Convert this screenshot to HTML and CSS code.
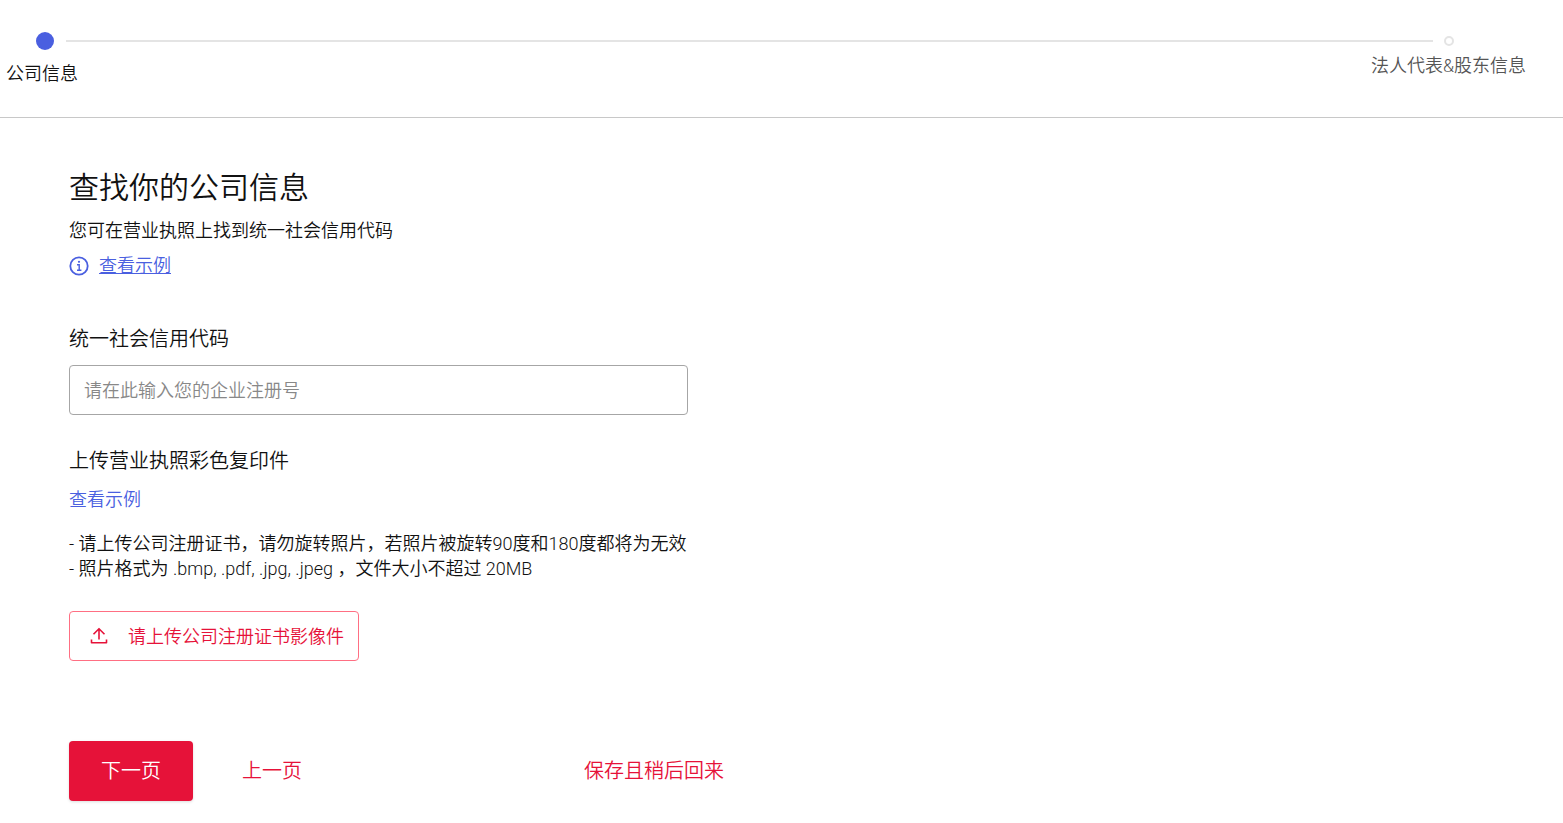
FILE: index.html
```html
<!DOCTYPE html>
<html lang="zh-CN">
  <head>
    <meta charset="UTF-8" />
    <meta name="viewport" content="width=device-width, initial-scale=1.0" />
    <title>公司信息</title>
    <link rel="stylesheet" href="styles.css">
  </head>
  <body>
    <header>
      <div class="stepper">
        <span class="dot dot-active"></span>
        <span class="line"></span>
        <span class="dot"></span>
      </div>
      <div class="step-labels">
        <span class="step-current">公司信息</span>
        <span class="step-next">法人代表&amp;股东信息</span>
      </div>
    </header>

    <main>
      <h1>查找你的公司信息</h1>
      <p class="intro">您可在营业执照上找到统一社会信用代码</p>
      <div class="example">
        <svg width="20" height="20" viewBox="0 0 20 20" fill="none" stroke="currentColor" stroke-width="1.8" aria-hidden="true">
          <circle cx="10" cy="10" r="8.7" />
          <path d="M8 8.7h2.2V14.5M8 14.2h4.4" stroke-width="1.4" />
          <circle cx="10" cy="5.8" r="1.1" fill="currentColor" stroke="none" />
        </svg>
        <a href="#">查看示例</a>
      </div>

      <form>
        <label for="creditCode">统一社会信用代码</label>
        <input type="text" id="creditCode" placeholder="请在此输入您的企业注册号" />

        <h2>上传营业执照彩色复印件</h2>
        <a class="upload-example" href="#">查看示例</a>
        <p class="notes">
          - 请上传公司注册证书，请勿旋转照片，若照片被旋转90度和180度都将为无效<br />
          - 照片格式为 .bmp, .pdf, .jpg, .jpeg ，文件大小不超过 20MB
        </p>
        <button type="button" class="upload">
          <svg width="18" height="18" viewBox="0 0 18 18" fill="none" stroke="currentColor" stroke-width="1.6" aria-hidden="true">
            <path d="M9 12.500V2M3.500 7.200L9 1.700l5.500 5.500M1.500 12.500v3.300h15v-3.300" stroke-linejoin="round" />
          </svg>
          请上传公司注册证书影像件
        </button>

        <div class="actions">
          <button type="submit" class="next">下一页</button>
          <button type="button" class="back">上一页</button>
          <button type="button" class="save">保存且稍后回来</button>
        </div>
      </form>
    </main>
  </body>
</html>
```

FILE: styles.css
```css
* {
  box-sizing: border-box;
}
body {
  margin: 0;
  background-color: #fff;
  color: #111;
  font-family: Roboto, 'Noto Sans CJK SC', sans-serif;
  font-size: 18px;
  font-weight: 350;
  line-height: 25px;
}
a {
  color: #4a5fe0;
}

/* Progress steps */
header {
  padding: 32px 37px 31px 6px;
  border-bottom: 1px solid #c8c8c8;
}
.stepper {
  display: flex;
  align-items: center;
  padding: 0 72px 0 30px;
}
.dot {
  width: 10px;
  height: 10px;
  border: 2px solid #e4e4e4;
  border-radius: 50%;
}
.dot-active {
  width: 18px;
  height: 18px;
  border: none;
  background-color: #4a5fe0;
}
.line {
  flex: 1;
  height: 2px;
  margin: 0 11px 0 12px;
  background-color: #e4e4e4;
}
.step-labels {
  display: flex;
  justify-content: space-between;
  align-items: flex-start;
  padding-top: 3px;
}
.step-current {
  padding-top: 8px;
}
.step-next {
  color: #555;
}

main {
  padding: 48px 69px 22px;
}
h1 {
  margin: 0;
  font-size: 30px;
  font-weight: 350;
  line-height: 44px;
}
.intro {
  margin: 8px 0 10px;
}
.example {
  display: flex;
  align-items: center;
  gap: 10px;
  color: #4a5fe0;
}

/* Company form */
form {
  margin-top: 47px;
}
label,
h2 {
  display: block;
  margin: 0;
  font-size: 20px;
  font-weight: 350;
  line-height: 28px;
}
input[type='text'] {
  display: block;
  width: 100%;
  max-width: 619px;
  height: 50px;
  margin: 12px 0 32px;
  padding: 0 14px;
  border: 1px solid #a6a6a6;
  border-radius: 4px;
  font: inherit;
}
input::placeholder {
  color: #888;
  opacity: 1;
}
.upload-example {
  display: block;
  width: fit-content;
  margin-top: 12px;
  text-decoration: none;
}
.notes {
  margin: 19px 0 30px;
}

button {
  padding: 0;
  border: none;
  border-radius: 4px;
  background: none;
  color: #e61239;
  font: inherit;
  cursor: pointer;
}
.upload {
  display: flex;
  align-items: center;
  gap: 20px;
  height: 50px;
  padding: 0 14px 0 20px;
  border: 1px solid #ff6f83;
}
.actions {
  display: flex;
  align-items: center;
  max-width: 655px;
  margin-top: 80px;
}
.actions button {
  height: 60px;
  font-size: 20px;
}
.actions .next {
  padding: 0 32px;
  background-color: #e61239;
  box-shadow: 0 1px 3px #ddd;
  color: #fff;
}
.actions .back {
  margin-left: 49px;
}
.actions .save {
  margin-left: auto;
}
```
